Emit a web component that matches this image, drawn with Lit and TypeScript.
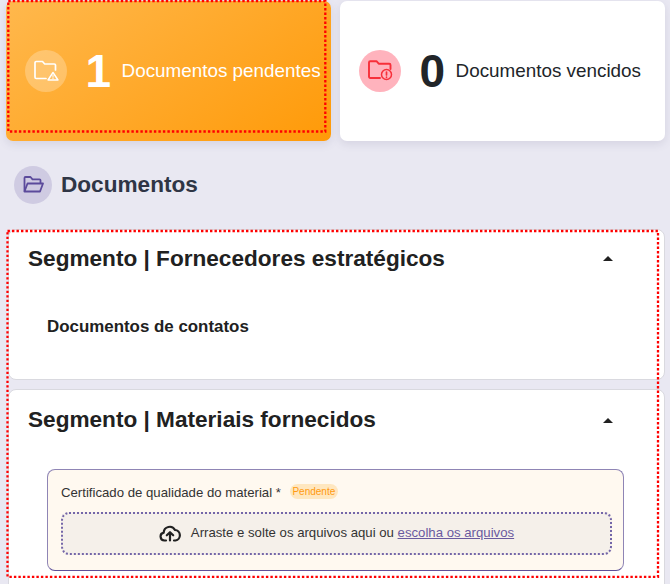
import { LitElement, html, css } from "lit";
import { customElement } from "lit/decorators.js";

@customElement("app-root")
export class AppRoot extends LitElement {
  static styles = css`
    :host { display: block; position: relative; width: 670px; height: 584px; overflow: hidden; background: #e9e8f2; font-family: "Liberation Sans", Arial, sans-serif; color: #212121; box-sizing: border-box; }
    * { box-sizing: border-box; }
    .stats { display: flex; gap: 9.500px; padding: 1px 5px 0 6px; }
    .stat { flex: 0 0 324.500px; height: 140px; border-radius: 7px; box-shadow: 0 3px 8px rgba(90, 85, 130, .14); display: flex; align-items: center; padding-left: 19px; }
    .orange { background: linear-gradient(145deg, #ffb84d 0%, #ff9a08 100%); color: #fff; }
    .white { background: #fff; color: #212529; }
    .circle { flex: none; border-radius: 50%; display: flex; align-items: center; justify-content: center; }
    .stat .circle { width: 42px; height: 42px; margin-right: 18.500px; }
    .orange .circle { background: rgba(255, 255, 255, .25); }
    .white .circle { background: #ffb3bd; }
    .num { font-size: 46px; font-weight: 700; line-height: 1; margin-right: 10.500px; }
    .stat-label { font-size: 18.850px; }
    .heading { display: flex; align-items: center; gap: 9px; padding: 25px 0 27px 14px; }
    .heading .circle { width: 38px; height: 38px; background: #cfcbe2; }
    h1 { margin: 0; font-size: 22.600px; font-weight: 700; color: #2f3545; }
    .sections { margin: -2px 5px 0 8px; display: flex; flex-direction: column; gap: 9px; }
    .panel { background: #fff; border: 1px solid #d9d9df; border-radius: 8px; padding-left: 19px; height: 151px; }
    .panel.open { height: 220px; }
    .panel-head { display: flex; align-items: center; justify-content: space-between; height: 57px; padding-right: 51px; }
    .open .panel-head { height: 60px; }
    h2 { margin: 0; font-size: 22.600px; font-weight: 700; color: #212121; }
    .caret { width: 0; height: 0; border-left: 5px solid transparent; border-right: 5px solid transparent; border-bottom: 5px solid #212121; }
    h3 { margin: 0; font-size: 16.900px; font-weight: 700; padding: 30px 0 0 19px; color: #212121; }
    .doc { margin: 19px 0 0 19px; width: 577px; height: 101.500px; background: #fff9f0; border: 1px solid #8f85b5; border-bottom-color: #5d5099; border-radius: 8px; padding: 14px 11px 0 13px; }
    .doc-title { display: flex; align-items: center; gap: 9px; font-size: 13.200px; color: #333; height: 17px; }
    .badge { font-size: 10px; color: #ff9a10; background: #ffe7bf; border-radius: 8px; padding: 0 2.500px; line-height: 15px; margin-top: -3px; }
    .drop { margin-top: 10.500px; height: 43.500px; background: #f5f0ea; border: 2px dotted #7466a8; border-radius: 8px; display: flex; align-items: center; justify-content: center; gap: 10px; font-size: 13.200px; color: #333; padding-bottom: 1px; }
    a { color: #6a5aa0; text-decoration: underline; }
    .marks { position: absolute; left: 0; top: 0; pointer-events: none; }
    .marks rect { fill: none; stroke: #f00; stroke-width: 2.300; stroke-dasharray: 2.400 2.100; }
  `;

  render() {
    return html`
      <div class="stats">
        <div class="stat orange">
          <div class="circle">
            <svg width="26" height="22" viewBox="0 0 26 22" fill="none" stroke="#fff" stroke-width="1.700" stroke-linejoin="round" stroke-linecap="round">
              <path d="M13 18.500H3.200A1.200 1.200 0 0 1 2 17.300V2.700A1.200 1.200 0 0 1 3.200 1.500H9.500l2.200 2.500h9.600A1.200 1.200 0 0 1 22.500 5.200V10" />
              <path d="M20 12.500 15 20h10Z" stroke-width="1.400" />
              <path d="M20 15.300v2M20 18.500v.2" stroke-width="1" />
            </svg>
          </div>
          <div class="num">1</div>
          <div class="stat-label">Documentos pendentes</div>
        </div>
        <div class="stat white">
          <div class="circle">
            <svg width="26" height="22" viewBox="0 0 26 22" fill="none" stroke="#f7303a" stroke-width="1.900" stroke-linejoin="round" stroke-linecap="round">
              <path d="M13 18H3.200A1.200 1.200 0 0 1 2 16.800V2.400A1.200 1.200 0 0 1 3.200 1.200H9.500l2.200 2.500h10.600A1.200 1.200 0 0 1 23.500 4.900V9" />
              <circle cx="19.500" cy="14.500" r="5" stroke-width="1.500" />
              <path d="M19.500 12v3M19.500 17.200v.1" stroke-width="1.700" />
            </svg>
          </div>
          <div class="num">0</div>
          <div class="stat-label">Documentos vencidos</div>
        </div>
      </div>
      <div class="heading">
        <div class="circle">
          <svg width="22" height="18" viewBox="0 0 22 18" fill="none" stroke="#5b4a9b" stroke-width="1.800" stroke-linejoin="round">
            <path d="M2.500 15.500V2A1 1 0 0 1 3.500 1h5l2 2.300h7a1 1 0 0 1 1 1V7" />
            <path d="M2.500 15.500 5.500 7.500h15.500l-3 8Z" />
          </svg>
        </div>
        <h1>Documentos</h1>
      </div>
      <div class="sections">
        <div class="panel">
          <div class="panel-head"><h2>Segmento | Fornecedores estratégicos</h2><div class="caret"></div></div>
          <h3>Documentos de contatos</h3>
        </div>
        <div class="panel open">
          <div class="panel-head"><h2>Segmento | Materiais fornecidos</h2><div class="caret"></div></div>
          <div class="doc">
            <div class="doc-title"><span>Certificado de qualidade do material *</span><span class="badge">Pendente</span></div>
            <div class="drop">
              <svg width="22" height="18" viewBox="0 0 22 18" fill="none" stroke="#212121" stroke-width="2.200" stroke-linecap="round" stroke-linejoin="round">
                <path d="M7 16.500H5.500a4 4 0 0 1-.8-7.900A6 6 0 0 1 16 6a5.300 5.300 0 0 1 .5 10.500H15" />
                <path d="M11 16.500V8.500M7.800 11.300 11 8.200l3.200 3.100" />
              </svg>
              <span>Arraste e solte os arquivos aqui ou <a href="#">escolha os arquivos</a></span>
            </div>
          </div>
        </div>
      </div>
      <svg class="marks" width="670" height="584">
        <rect x="8.300" y="1" width="317" height="130.500" />
        <rect x="7.500" y="231" width="650.500" height="345.800" />
      </svg>
    `;
  }
}
